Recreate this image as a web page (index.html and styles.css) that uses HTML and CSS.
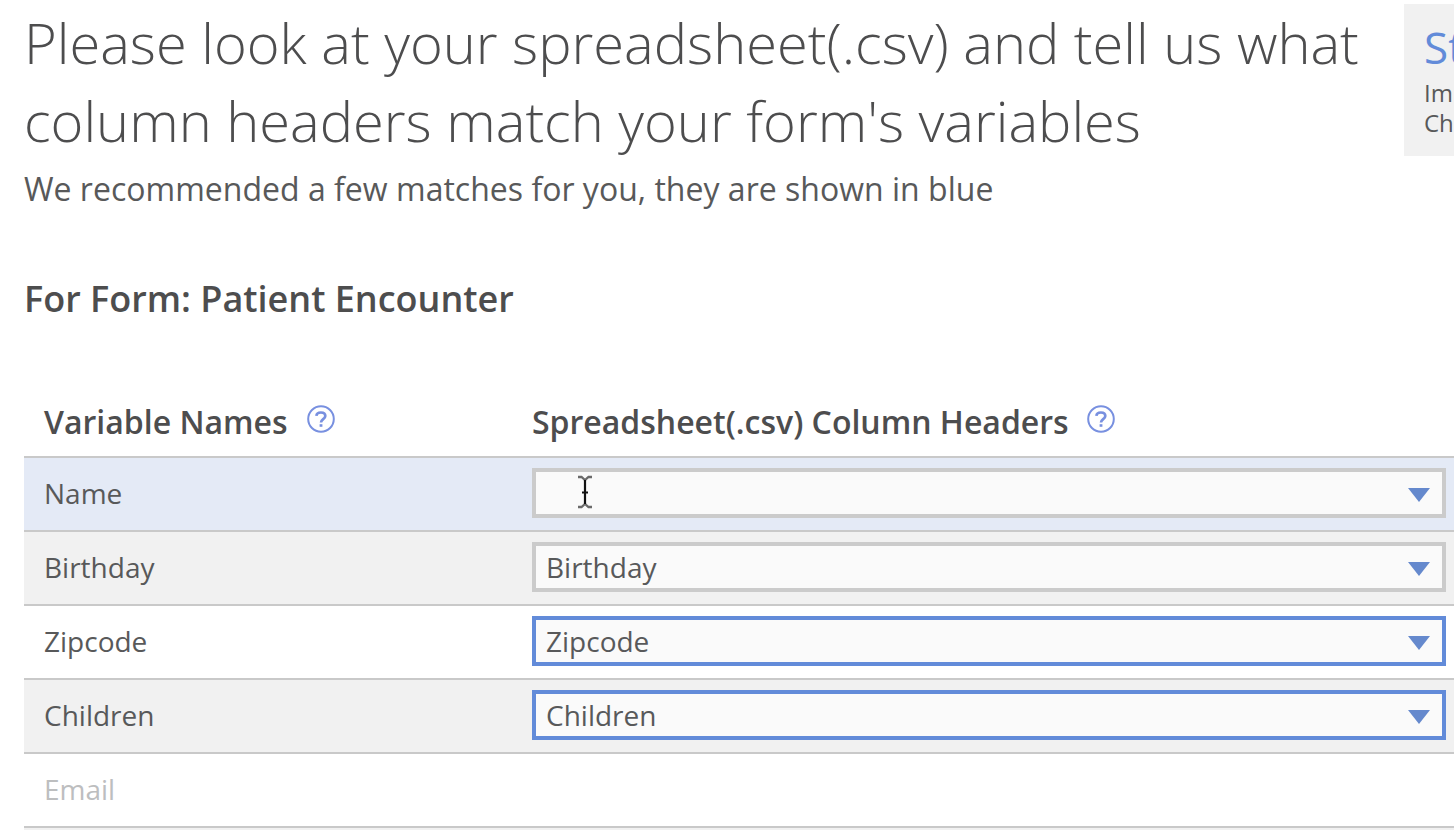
FILE: index.html
```html
<!DOCTYPE html>
<html lang="en">
<head>
<meta charset="utf-8">
<title>Match column headers</title>
<link rel="stylesheet" href="styles.css">
</head>
<body>
<svg class="defs" width="0" height="0" aria-hidden="true">
  <symbol id="help" viewBox="0 0 28 28">
    <circle cx="14" cy="14" r="12.800" fill="none" stroke="#7890e0" stroke-width="2"/>
    <path d="M9.400 10.900C9.600 8.500 11.300 7.500 13.900 7.500c2.700 0 4.400 1.300 4.400 3.500 0 3.200-4.300 3.200-4.300 6.600" fill="none" stroke="#7890e0" stroke-width="2.700"/>
    <path d="M12.600 19.200h2.800v2.600h-2.800z" fill="#7890e0"/>
  </symbol>
</svg>
<div class="page">
  <main class="content">
    <header class="top">
      <div class="intro">
        <h1 class="title">Please look at your spreadsheet(.csv) and tell us what<br>column headers match your form's variables</h1>
        <p class="hint">We recommended a few matches for you, they are shown in blue</p>
      </div>
      <aside class="step">
        <h2 class="step-title">Step 2</h2>
        <p class="step-text">Import<br>Choose</p>
      </aside>
    </header>
    <h2 class="form-name">For Form: Patient Encounter</h2>
    <section class="table">
      <div class="row head">
        <div class="cell"><span>Variable Names</span><svg class="help"><use href="#help"/></svg></div>
        <div class="cell"><span>Spreadsheet(.csv) Column Headers</span><svg class="help"><use href="#help"/></svg></div>
      </div>
      <div class="row active">
        <div class="cell"><span>Name</span></div>
        <div class="select"><span></span><svg class="arrow" viewBox="0 0 22 14"><path d="M0 0h22L11 14z"/></svg></div>
      </div>
      <div class="row alt">
        <div class="cell"><span>Birthday</span></div>
        <div class="select"><span>Birthday</span><svg class="arrow" viewBox="0 0 22 14"><path d="M0 0h22L11 14z"/></svg></div>
      </div>
      <div class="row">
        <div class="cell"><span>Zipcode</span></div>
        <div class="select matched"><span>Zipcode</span><svg class="arrow" viewBox="0 0 22 14"><path d="M0 0h22L11 14z"/></svg></div>
      </div>
      <div class="row alt">
        <div class="cell"><span>Children</span></div>
        <div class="select matched"><span>Children</span><svg class="arrow" viewBox="0 0 22 14"><path d="M0 0h22L11 14z"/></svg></div>
      </div>
      <div class="row muted">
        <div class="cell"><span>Email</span></div>
      </div>
      <div class="row alt"></div>
    </section>
  </main>
  <svg class="cursor" viewBox="0 0 16 34">
    <path d="M1 2H4.500L8 5L11.500 2H15M1 32H4.500L8 29L11.500 32H15" fill="none" stroke="#6a6a6a" stroke-width="2.300"/>
    <path d="M8 5V29M5 17.500H11" fill="none" stroke="#111" stroke-width="2.200"/>
  </svg>
</div>
</body>
</html>
```

FILE: styles.css
```css
* { box-sizing: border-box; }
body {
  margin: 0;
  background: #fff;
  color: #58595a;
  font-family: "Open Sans", "Noto Sans", sans-serif;
}
h1, h2, p { margin: 0; }
.defs { position: absolute; }
.page {
  position: relative;
  width: 1454px;
  height: 830px;
  overflow: hidden;
}
.content { padding: 4px 0 0 24px; }
.top { display: flex; width: 1500px; height: 206px; }
.intro { width: 1380px; flex: none; }
.title {
  margin-top: -1px;
  font-size: 56px;
  font-weight: 300;
  line-height: 78px;
  color: #4d4d4e;
  white-space: nowrap;
}
.hint { margin-top: 8px; font-size: 32px; line-height: 44px; letter-spacing: 0.015px; }
.step {
  flex: none;
  width: 260px;
  height: 152px;
  padding: 15px 20px;
  background: #f1f1f1;
}
.step-title { font-size: 44px; font-weight: 400; line-height: 56px; color: #628bd9; }
.step-text { margin-top: 3px; font-size: 24px; line-height: 30px; }
.form-name {
  margin-top: 64px;
  font-size: 36px;
  font-weight: 600;
  line-height: 50px;
  color: #4d4d4e;
}
.table { margin-top: 64px; width: 1430px; }
.row {
  display: grid;
  grid-template-columns: 508px 914px;
  align-items: center;
  height: 74px;
  padding-bottom: 2px;
  border-top: 2px solid #c9c9c9;
  font-size: 28px;
}
.row.head {
  height: 68px;
  border-top: 0;
  font-size: 32px;
  font-weight: 600;
  color: #4d4d4e;
}
.cell { display: flex; align-items: center; padding-left: 20px; white-space: nowrap; }
.head .cell + .cell { padding-left: 0; }
.active { background: #e4eaf6; }
.alt { background: #f1f1f1; }
.muted { color: #bdbebf; }
.help { width: 28px; height: 28px; margin: -4px 0 0 19px; }
.head .cell + .cell .help { margin-left: 18px; }
.select {
  display: flex;
  align-items: center;
  justify-content: space-between;
  height: 50px;
  padding: 0 12px 0 10px;
  border: 4px solid #cbcbcb;
  background: #fafafa;
}
.select.matched { border-color: #628bd9; }
.arrow { width: 22px; height: 14px; margin-top: 4px; fill: #6589cd; }
.cursor { position: absolute; left: 577px; top: 475px; width: 16px; height: 34px; }
```
